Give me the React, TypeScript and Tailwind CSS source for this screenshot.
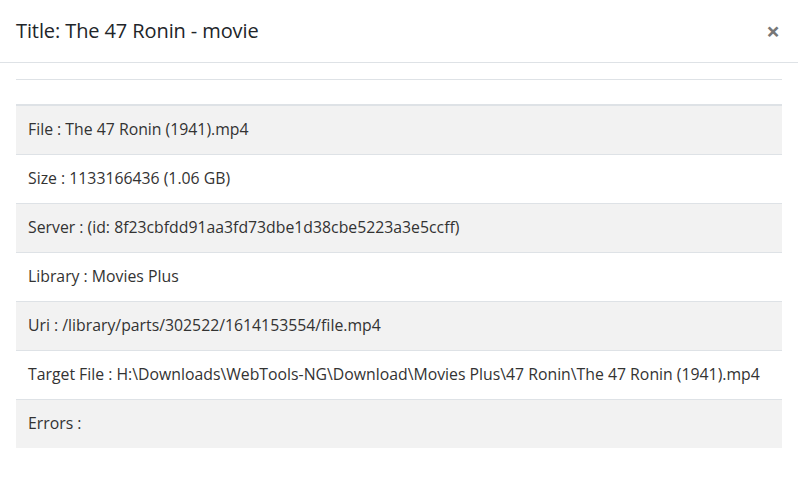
import React from "react";

const rows = [
  "File : The 47 Ronin (1941).mp4",
  "Size : 1133166436 (1.06 GB)",
  "Server : (id: 8f23cbfdd91aa3fd73dbe1d38cbe5223a3e5ccff)",
  "Library : Movies Plus",
  "Uri : /library/parts/302522/1614153554/file.mp4",
  "Target File : H:\\Downloads\\WebTools-NG\\Download\\Movies Plus\\47 Ronin\\The 47 Ronin (1941).mp4",
  "Errors :",
];

export default function App() {
  return (
    <div
      className="w-[798px] h-[480px] bg-white text-[#212529] overflow-hidden"
      style={{ fontFamily: '"Open Sans", "Noto Sans", sans-serif' }}
    >
      {/* Header */}
      <div className="h-[63px] flex items-center justify-between pl-4 pr-[18px] border-b border-[#dee2e6]">
        <h5 className="text-[20px] font-medium leading-none tracking-[-0.1px]">Title: The 47 Ronin - movie</h5>
        <span className="text-[24px] leading-none text-[#777] font-bold">×</span>
      </div>

      {/* Body */}
      <div className="px-4 pt-4 text-[15.8px]">
        {/* empty table head */}
        <div className="h-[27px] border-t border-b-2 border-[#dee2e6]" />
        {rows.map((r, i) => (
          <div
            key={i}
            className={`h-[48px] flex items-center px-3 text-[#333] whitespace-nowrap box-content ${
              i % 2 === 0 ? "bg-[#f2f2f2]" : "bg-white"
            } ${i > 0 ? "border-t border-[#dee2e6]" : ""}`}
          >
            {r}
          </div>
        ))}
      </div>
    </div>
  );
}
